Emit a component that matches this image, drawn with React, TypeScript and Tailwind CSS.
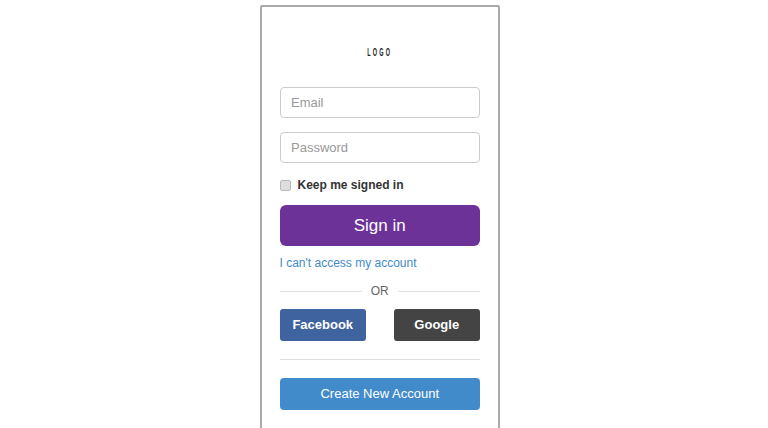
export default function App() {
  return (
    <div className="h-[428px] w-[768px] overflow-hidden bg-white font-['Liberation_Sans',Arial,sans-serif] text-[#333]">
      <div className="ml-[259.5px] mt-[5px] w-[240.5px] rounded-[2px] border-2 border-[#aaaaaa] px-[18px] pb-[40px]">
        {/* Logo */}
        <div className="flex h-[80px] items-start justify-center pt-[40px]">
          <span className="inline-block scale-x-[0.55] text-[10px] leading-[12px] font-bold tracking-[4px] text-[#222]">LOGO</span>
        </div>

        <input
          type="text"
          placeholder="Email"
          className="block h-[31px] w-full rounded-[4px] border border-[#cccccc] px-[10.5px] text-[13px] outline-none placeholder:text-[#999]"
        />
        <input
          type="password"
          placeholder="Password"
          className="mt-[14px] block h-[31px] w-full rounded-[4px] border border-[#cccccc] px-[10.5px] text-[13px] outline-none placeholder:text-[#999]"
        />

        <label className="mt-[14px] flex h-[16px] items-center gap-[7px] text-[12px] font-bold">
          <input type="checkbox" className="h-[11px] w-[11px] appearance-none rounded-[2px] border border-[#bbbbbb] bg-[#dddddd]" />
          Keep me signed in
        </label>

        <button className="mt-[11.5px] block h-[41.5px] w-full rounded-[6px] bg-[#6c3298] text-[17px] text-white">
          Sign in
        </button>

        <a href="#" className="mt-[9px] block text-[12px] leading-[16px] text-[#428bca]">
          I can't access my account
        </a>

        <div className="mt-[12px] flex items-center text-[12px] leading-[16px] text-[#666]">
          <div className="h-px flex-1 bg-[#dddddd]" />
          <span className="px-[9px]">OR</span>
          <div className="h-px flex-1 bg-[#dddddd]" />
        </div>

        <div className="mt-[10px] flex justify-between">
          <button className="h-[32px] w-[86.5px] rounded-[3px] bg-[#3f639f] text-[13px] font-bold text-white">
            Facebook
          </button>
          <button className="h-[32px] w-[86.5px] rounded-[3px] bg-[#444444] text-[13px] font-bold text-white">
            Google
          </button>
        </div>

        <div className="mt-[18px] h-px bg-[#dddddd]" />

        <button className="mt-[18px] block h-[32px] w-full rounded-[4px] bg-[#428bca] text-[13px] text-white">
          Create New Account
        </button>
      </div>
    </div>
  );
}
